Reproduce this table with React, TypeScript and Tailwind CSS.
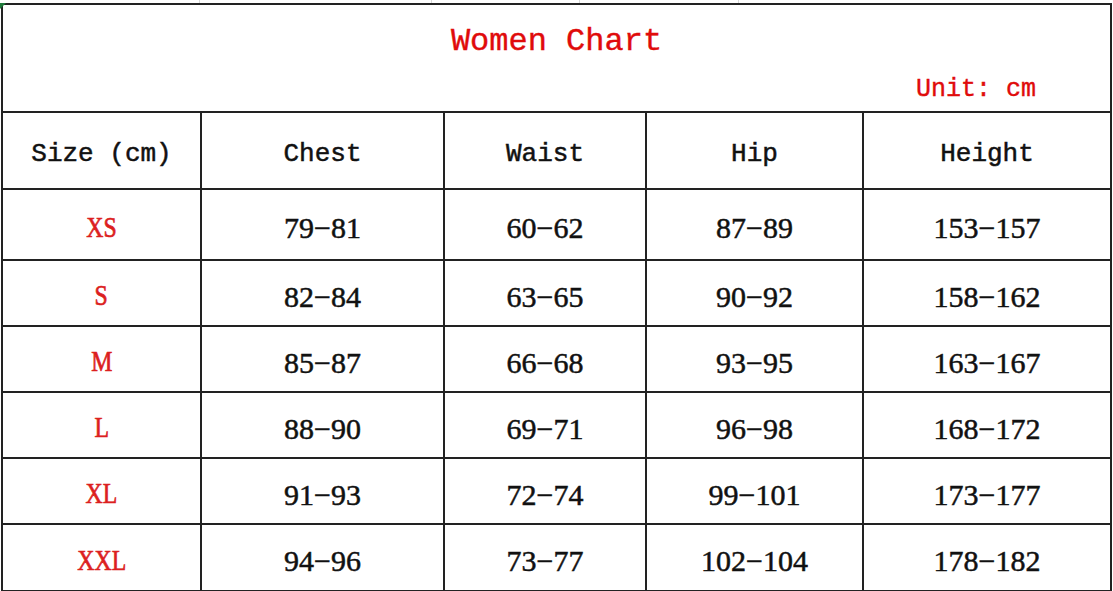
const headers = ["Size (cm)", "Chest", "Waist", "Hip", "Height"];

const rows = [
  { size: "XS", values: ["79−81", "60−62", "87−89", "153−157"], h: "h-[71px]" },
  { size: "S", values: ["82−84", "63−65", "90−92", "158−162"], h: "h-[66px]" },
  { size: "M", values: ["85−87", "66−68", "93−95", "163−167"], h: "h-[66px]" },
  { size: "L", values: ["88−90", "69−71", "96−98", "168−172"], h: "h-[66px]" },
  { size: "XL", values: ["91−93", "72−74", "99−101", "173−177"], h: "h-[66px]" },
  { size: "XXL", values: ["94−96", "73−77", "102−104", "178−182"], h: "h-[67px]" },
];

const mono = "font-['Liberation_Mono',monospace]";
const serif = "font-['Liberation_Serif',serif]";

export default function App() {
  return (
    <div className="relative w-[1113px] h-[591px] bg-white overflow-hidden">
      {/* faint sheet gridlines above the table */}
      <div className="flex h-[3px]">
        <div className="w-[200px] border-r border-[#d8d8d8]" />
        <div className="w-[232px] border-r border-[#d8d8d8]" />
        <div className="w-[148px] border-r border-[#d8d8d8]" />
        <div className="w-[159px] border-r border-[#d8d8d8]" />
      </div>
      <div className="absolute left-0 top-[3px] w-0 h-0 border-t-[6px] border-r-[6px] border-t-[#1f7a3a] border-r-transparent" />

      <div className="ml-[1px] w-[1111px] border-l-2 border-t-2 border-[#222]">
        {/* title row */}
        <div className="h-[108px] flex flex-col border-r-2 border-b-2 border-[#222]">
          <div className={`pt-[18px] text-center text-[32px] leading-[38px] text-[#e00b0b] [-webkit-text-stroke:0.4px_#e00b0b] ${mono}`}>
            Women Chart
          </div>
          <div className={`mt-[14px] flex justify-end pr-[74px] text-[25px] leading-[30px] text-[#e00b0b] [-webkit-text-stroke:0.4px_#e00b0b] ${mono}`}>
            Unit: cm
          </div>
        </div>

        <div className="grid grid-cols-[199px_243px_202px_217px_248px]">
          {headers.map((h) => (
            <div
              key={h}
              className={`h-[77px] flex items-center justify-center pt-[8px] border-r-2 border-b-2 border-[#222] text-[26px] text-[#111] whitespace-pre [-webkit-text-stroke:0.5px_#111] ${mono}`}
            >
              {h}
            </div>
          ))}

          {rows.map((r) => (
            <div key={r.size} className="contents">
              <div
                className={`${r.h} flex items-center justify-center pt-[6px] border-r-2 border-b-2 border-[#222]`}
              >
                <span className={`inline-block scale-x-[0.82] text-[29px] text-[#dc1f1f] [-webkit-text-stroke:0.7px_#dc1f1f] ${serif}`}>
                  {r.size}
                </span>
              </div>
              {r.values.map((v, i) => (
                <div
                  key={i}
                  className={`${r.h} flex items-center justify-center pt-[6px] border-r-2 border-b-2 border-[#222] text-[30px] text-[#111] [-webkit-text-stroke:0.5px_#111] ${serif}`}
                >
                  {v}
                </div>
              ))}
            </div>
          ))}
        </div>
      </div>
    </div>
  );
}
